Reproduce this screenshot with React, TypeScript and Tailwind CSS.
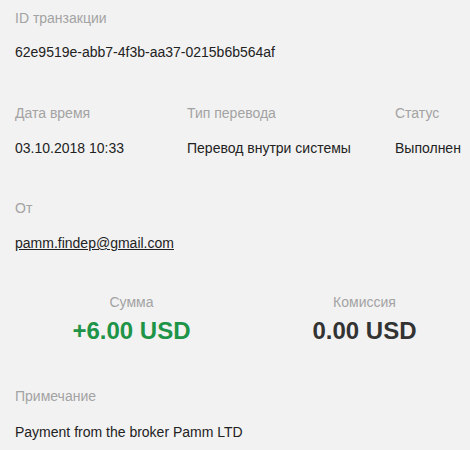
import React from 'react';

const Label: React.FC<{ children: React.ReactNode }> = ({ children }) => (
  <div className="text-[14px] leading-5 text-[#a3a3a3]">{children}</div>
);

const Value: React.FC<{ children: React.ReactNode; className?: string }> = ({ children, className = 'mt-[15px]' }) => (
  <div className={`${className} text-[14px] leading-5 text-[#222]`}>{children}</div>
);

export default function App() {
  return (
    <div className="min-h-[450px] w-[470px] overflow-hidden bg-[#f2f2f2] px-[15px] pt-2 font-['Liberation_Sans',Arial,sans-serif]">
      <div>
        <Label>ID транзакции</Label>
        <Value className="mt-[14px]">62e9519e-abb7-4f3b-aa37-0215b6b564af</Value>
      </div>

      <div className="mt-[41px] flex">
        <div className="w-[172px] shrink-0">
          <Label>Дата время</Label>
          <Value>03.10.2018 10:33</Value>
        </div>
        <div className="w-[208px] shrink-0">
          <Label>Тип перевода</Label>
          <Value>Перевод внутри системы</Value>
        </div>
        <div className="shrink-0 whitespace-nowrap">
          <Label>Статус</Label>
          <Value>Выполнен</Value>
        </div>
      </div>

      <div className="mt-10">
        <Label>От</Label>
        <Value>
          <a href="#" className="underline">pamm.findep@gmail.com</a>
        </Value>
      </div>

      <div className="mt-[39px] flex">
        <div className="flex w-[233px] shrink-0 flex-col items-center">
          <Label>Сумма</Label>
          <div className="mt-[5px] text-[24px] font-bold leading-7 text-[#1d9447]">+6.00 USD</div>
        </div>
        <div className="flex w-[233px] shrink-0 flex-col items-center">
          <Label>Комиссия</Label>
          <div className="mt-[5px] text-[24px] font-bold leading-7 text-[#333]">0.00 USD</div>
        </div>
      </div>

      <div className="mt-[41px]">
        <Label>Примечание</Label>
        <Value className="mt-4">Payment from the broker Pamm LTD</Value>
      </div>
    </div>
  );
}
